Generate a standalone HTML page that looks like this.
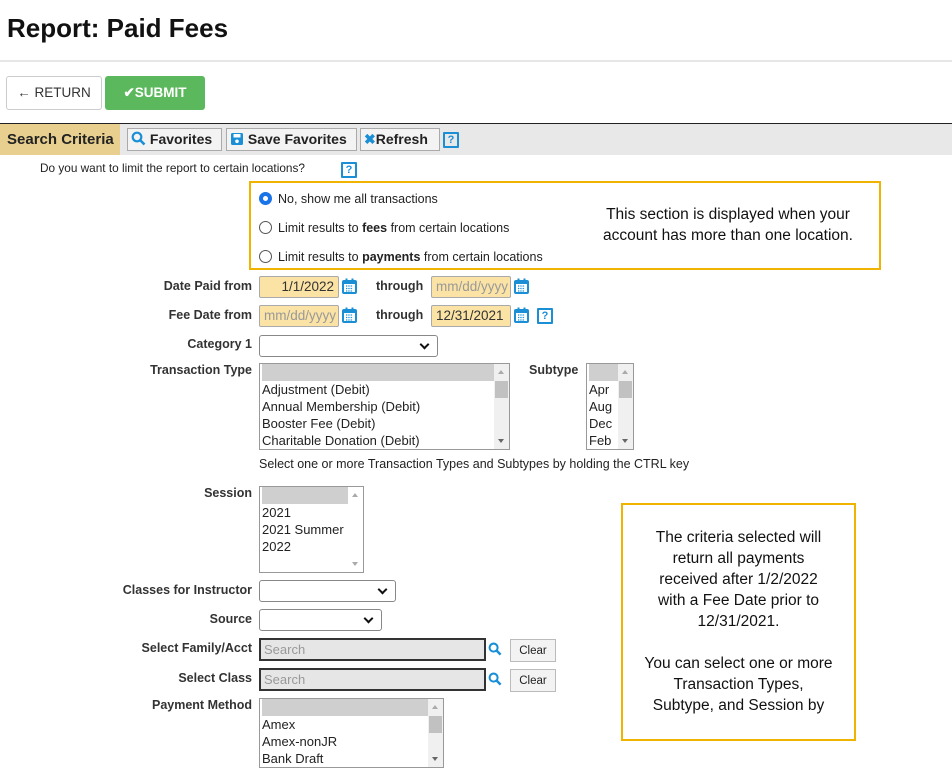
<!DOCTYPE html>
<html><head><meta charset="utf-8"><style>
*{box-sizing:border-box;margin:0;padding:0}
body{width:952px;height:772px;overflow:hidden;background:#fff;font-family:"Liberation Sans",sans-serif;color:#222;position:relative}
.a{position:absolute;white-space:nowrap}
.lbl{position:absolute;font-size:12.5px;font-weight:bold;color:#333;text-align:right;width:252px;left:0}
.t{font-size:12.5px;color:#222}
.inp{position:absolute;height:22px;border:1px solid #aaa;border-radius:2px;background:#fbe3a6;font-size:13.5px;padding:2px 4px;color:#333;white-space:nowrap;overflow:hidden}
.ph{color:#999}
.sel{position:absolute;height:22px;border:1px solid #888;border-radius:3px;background:#fff}
.sel:after{content:"";position:absolute;right:9px;top:5px;width:5px;height:5px;border-right:2px solid #111;border-bottom:2px solid #111;transform:rotate(45deg)}
.lb{position:absolute;border:1px solid #999;background:#fff;font-size:13px;line-height:17px;color:#222;overflow:hidden}
.lb .h{height:17px;background:#cfcfcf}
.lb .sb{position:absolute;right:0;top:0;bottom:0;width:15px;background:#f0f0f0}
.lb .sb .th{position:absolute;left:1px;right:1px;top:17px;height:17px;background:#c1c1c1}
.lb .sb .up{position:absolute;left:4px;top:6px;border:3.5px solid transparent;border-bottom:4px solid #aaa;border-top:0}
.lb .sb .dn{position:absolute;left:4px;bottom:6px;border:3.5px solid transparent;border-top:4px solid #666;border-bottom:0}
.lb .h{margin-right:15px}
.cal{position:absolute;width:15px;height:16px}
.q{position:absolute;width:16px;height:16px;border:2px solid #1a8fd6;color:#1a8fd6;font-size:11px;font-weight:bold;text-align:center;line-height:12px;border-radius:1px}
.tb{position:absolute;top:128px;height:23px;border:1px solid #aaa;background:#f3f3f3;font-size:14px;font-weight:bold;color:#222;padding:1px 3px;line-height:19px;white-space:nowrap;overflow:hidden}
.srch{position:absolute;height:23px;border:2px solid #333;background:#e6e6e6;font-size:13px;color:#999;padding:2px 3px;line-height:16px}
.clr{position:absolute;width:46px;height:23px;border:1px solid #bbb;background:#f3f3f3;font-size:11.5px;text-align:center;line-height:22px;color:#222}
.radio{position:absolute;width:13px;height:13px;border:1px solid #555;border-radius:50%;background:#fff}
</style></head><body>
<div class="a" style="left:7px;top:13px;font-size:26px;font-weight:bold;color:#111">Report: Paid Fees</div>
<div class="a" style="left:0;top:60px;width:952px;height:2px;background:#e6e6e6"></div>
<div class="a" style="left:6px;top:76px;width:96px;height:34px;border:1px solid #ccc;border-radius:3px;font-size:13.5px;color:#333;text-align:center;line-height:32px">&#8592; RETURN</div>
<div class="a" style="left:105px;top:76px;width:100px;height:34px;background:#5cb85c;border-radius:3px;font-size:13.5px;font-weight:bold;color:#fff;text-align:center;line-height:33px">&#10004;SUBMIT</div>
<div class="a" style="left:0;top:123px;width:952px;height:1px;background:#222"></div>
<div class="a" style="left:0;top:124px;width:952px;height:31px;background:#e8e8e8"></div>
<div class="a" style="left:0;top:124px;width:120px;height:31px;background:#e8cf8f;font-size:15px;font-weight:bold;color:#222;line-height:31px;padding-left:7px">Search Criteria</div>
<div class="tb" style="left:127px;width:95px"><svg width="15" height="15" viewBox="0 0 15 15" style="vertical-align:-2px"><circle cx="6" cy="6" r="4.3" fill="none" stroke="#1a8fd6" stroke-width="2.2"/><path d="M9 9l4.5 4.5" stroke="#1a8fd6" stroke-width="2.6"/></svg> Favorites</div>
<div class="tb" style="left:226px;width:131px"><svg width="14" height="14" viewBox="0 0 14 14" style="vertical-align:-2px"><rect x="1" y="1" width="12" height="12" rx="1.5" fill="#1a8fd6"/><rect x="3.5" y="2" width="7" height="3.5" fill="#fff"/><circle cx="7" cy="9.3" r="1.8" fill="#fff"/></svg> Save Favorites</div>
<div class="tb" style="left:360px;width:80px"><span style="color:#1a8fd6">&#10006;</span>Refresh</div>
<div class="q" style="left:443px;top:132px">?</div>
<div class="a" style="left:40px;top:161px;font-size:11.8px;color:#222">Do you want to limit the report to certain locations?</div>
<div class="q" style="left:341px;top:162px">?</div>
<div class="a" style="left:249px;top:181px;width:632px;height:89px;border:2px solid #f0b400"></div>
<div class="radio" style="left:259px;top:192px;border:4px solid #1a73e8"></div>
<div class="a t" style="left:278px;top:192px">No, show me all transactions</div>
<div class="radio" style="left:259px;top:221px"></div>
<div class="a t" style="left:278px;top:221px">Limit results to <b>fees</b> from certain locations</div>
<div class="radio" style="left:259px;top:250px"></div>
<div class="a t" style="left:278px;top:250px">Limit results to <b>payments</b> from certain locations</div>
<div class="a" style="left:578px;top:204px;width:300px;text-align:center;font-size:15.5px;line-height:21px;color:#111">This section is displayed when your<br>account has more than one location.</div>

<div class="lbl" style="top:279px">Date Paid from</div>
<div class="inp" style="left:259px;top:276px;width:80px;text-align:right">1/1/2022</div>
<svg class="cal" style="left:342px;top:278px" viewBox="0 0 15 16"><rect x="1" y="3" width="13" height="12" rx="1" fill="#fff" stroke="#1a8fd6" stroke-width="2"/><rect x="1" y="3" width="13" height="3" fill="#1a8fd6"/><rect x="3.5" y="0.5" width="2" height="3" fill="#1a8fd6"/><rect x="9.5" y="0.5" width="2" height="3" fill="#1a8fd6"/><path d="M4 8h7M4 10.5h7M4 13h7" stroke="#1a8fd6" stroke-width="1.2" stroke-dasharray="1.3 1"/></svg>
<div class="a" style="left:376px;top:279px;font-size:12.5px;font-weight:bold;color:#333">through</div>
<div class="inp ph" style="left:431px;top:276px;width:80px">mm/dd/yyyy</div>
<svg class="cal" style="left:514px;top:278px" viewBox="0 0 15 16"><rect x="1" y="3" width="13" height="12" rx="1" fill="#fff" stroke="#1a8fd6" stroke-width="2"/><rect x="1" y="3" width="13" height="3" fill="#1a8fd6"/><rect x="3.5" y="0.5" width="2" height="3" fill="#1a8fd6"/><rect x="9.5" y="0.5" width="2" height="3" fill="#1a8fd6"/><path d="M4 8h7M4 10.5h7M4 13h7" stroke="#1a8fd6" stroke-width="1.2" stroke-dasharray="1.3 1"/></svg>

<div class="lbl" style="top:308px">Fee Date from</div>
<div class="inp ph" style="left:259px;top:305px;width:80px">mm/dd/yyyy</div>
<svg class="cal" style="left:342px;top:307px" viewBox="0 0 15 16"><rect x="1" y="3" width="13" height="12" rx="1" fill="#fff" stroke="#1a8fd6" stroke-width="2"/><rect x="1" y="3" width="13" height="3" fill="#1a8fd6"/><rect x="3.5" y="0.5" width="2" height="3" fill="#1a8fd6"/><rect x="9.5" y="0.5" width="2" height="3" fill="#1a8fd6"/><path d="M4 8h7M4 10.5h7M4 13h7" stroke="#1a8fd6" stroke-width="1.2" stroke-dasharray="1.3 1"/></svg>
<div class="a" style="left:376px;top:308px;font-size:12.5px;font-weight:bold;color:#333">through</div>
<div class="inp" style="left:431px;top:305px;width:80px">12/31/2021</div>
<svg class="cal" style="left:514px;top:307px" viewBox="0 0 15 16"><rect x="1" y="3" width="13" height="12" rx="1" fill="#fff" stroke="#1a8fd6" stroke-width="2"/><rect x="1" y="3" width="13" height="3" fill="#1a8fd6"/><rect x="3.5" y="0.5" width="2" height="3" fill="#1a8fd6"/><rect x="9.5" y="0.5" width="2" height="3" fill="#1a8fd6"/><path d="M4 8h7M4 10.5h7M4 13h7" stroke="#1a8fd6" stroke-width="1.2" stroke-dasharray="1.3 1"/></svg>
<div class="q" style="left:537px;top:308px">?</div>

<div class="lbl" style="top:337px">Category 1</div>
<div class="sel" style="left:259px;top:335px;width:179px"></div>

<div class="lbl" style="top:363px">Transaction Type</div>
<div class="lb" style="left:259px;top:363px;width:251px;height:87px;padding-left:2px"><div class="h"></div>Adjustment (Debit)<br>Annual Membership (Debit)<br>Booster Fee (Debit)<br>Charitable Donation (Debit)<div class="sb"><div class="up"></div><div class="th"></div><div class="dn"></div></div></div>
<div class="a" style="left:529px;top:363px;font-size:12.5px;font-weight:bold;color:#333">Subtype</div>
<div class="lb" style="left:586px;top:363px;width:48px;height:87px;padding-left:2px"><div class="h"></div>Apr<br>Aug<br>Dec<br>Feb<div class="sb"><div class="up"></div><div class="th"></div><div class="dn"></div></div></div>
<div class="a t" style="left:259px;top:457px">Select one or more Transaction Types and Subtypes by holding the CTRL key</div>

<div class="lbl" style="top:486px">Session</div>
<div class="lb" style="left:259px;top:486px;width:105px;height:87px;padding-left:2px"><div class="h"></div>2021<br>2021 Summer<br>2022<div class="sb" style="background:#fff"><div class="up"></div><div class="dn" style="border-top-color:#aaa"></div></div></div>

<div class="a" style="left:621px;top:503px;width:235px;height:238px;border:2px solid #f0b400"></div>
<div class="a" style="left:623px;top:527px;width:231px;text-align:center;font-size:15.5px;line-height:21px;color:#111">The criteria selected will<br>return all payments<br>received after 1/2/2022<br>with a Fee Date prior to<br>12/31/2021.<br><br>You can select one or more<br>Transaction Types,<br>Subtype, and Session by</div>

<div class="lbl" style="top:583px">Classes for Instructor</div>
<div class="sel" style="left:259px;top:580px;width:137px"></div>
<div class="lbl" style="top:612px">Source</div>
<div class="sel" style="left:259px;top:609px;width:123px"></div>

<div class="lbl" style="top:641px">Select Family/Acct</div>
<div class="srch" style="left:259px;top:638px;width:227px">Search</div>
<svg class="a" style="left:488px;top:642px" width="14" height="14" viewBox="0 0 15 15"><circle cx="6" cy="6" r="4.3" fill="none" stroke="#1a8fd6" stroke-width="2.2"/><path d="M9 9l4.5 4.5" stroke="#1a8fd6" stroke-width="2.6"/></svg>
<div class="clr" style="left:510px;top:639px">Clear</div>

<div class="lbl" style="top:671px">Select Class</div>
<div class="srch" style="left:259px;top:668px;width:227px">Search</div>
<svg class="a" style="left:488px;top:672px" width="14" height="14" viewBox="0 0 15 15"><circle cx="6" cy="6" r="4.3" fill="none" stroke="#1a8fd6" stroke-width="2.2"/><path d="M9 9l4.5 4.5" stroke="#1a8fd6" stroke-width="2.6"/></svg>
<div class="clr" style="left:510px;top:669px">Clear</div>

<div class="lbl" style="top:698px">Payment Method</div>
<div class="lb" style="left:259px;top:698px;width:185px;height:70px;padding-left:2px"><div class="h"></div>Amex<br>Amex-nonJR<br>Bank Draft<div class="sb"><div class="up"></div><div class="th"></div><div class="dn"></div></div></div>
</body></html>
